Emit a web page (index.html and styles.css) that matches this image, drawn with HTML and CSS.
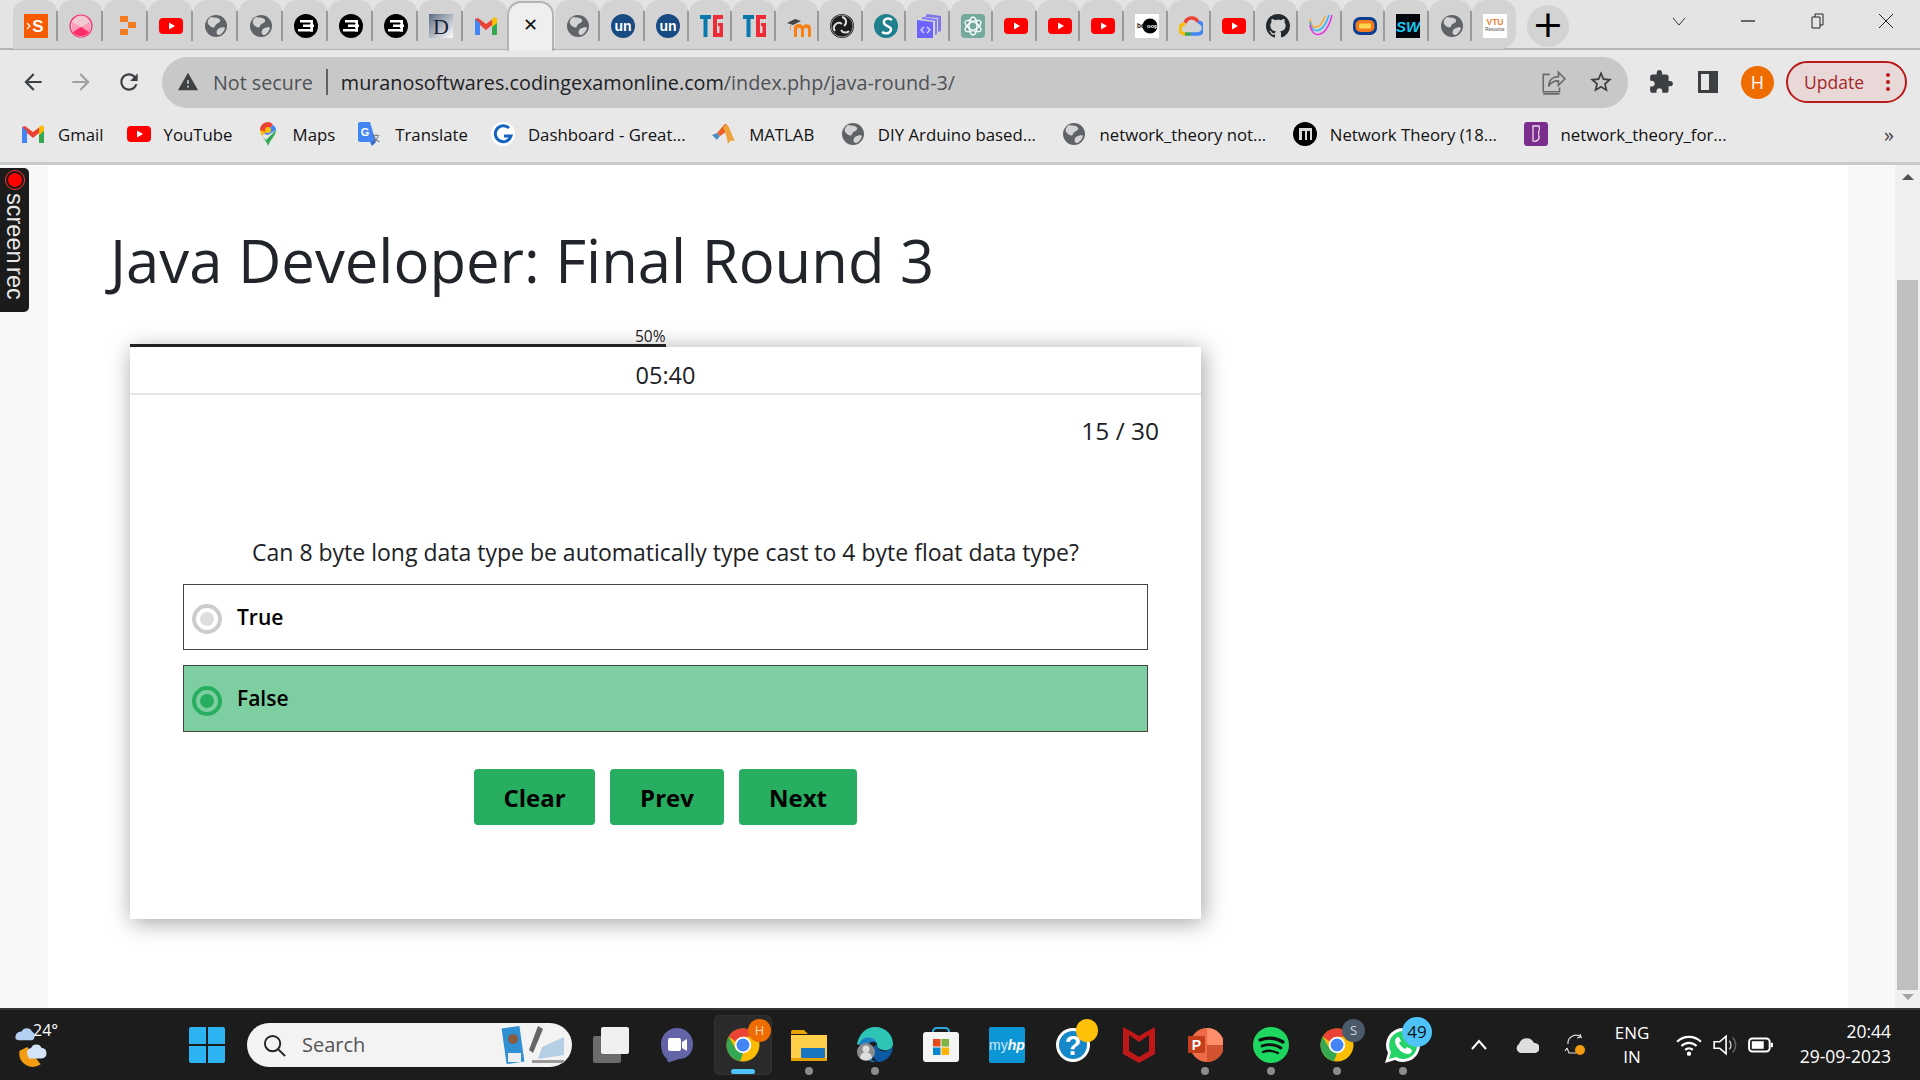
FILE: index.html
```html
<!DOCTYPE html>
<html lang="en">
<head>
  <meta charset="UTF-8">
  <title>Java Developer: Final Round 3</title>
  <link rel="stylesheet" href="styles.css">
</head>
<body>
  <!-- favicon set -->
  <svg class="defs" width="0" height="0">
    <symbol id="fav-pink" viewBox="0 0 24 24"><circle cx="12" cy="12" r="11" fill="#f2c9d5" stroke="#f4326c" stroke-width="1.2"/><path d="M3 8l9 5 9-5v9a10 10 0 0 1-18 0z" fill="#ff9db8"/><path d="M4 18l8-5 8 5a10 10 0 0 1-16 0z" fill="#fb2c68"/></symbol>
    <symbol id="fav-orange" viewBox="0 0 24 24"><path d="M6 2h8v6H6zM14 8h8v6h-8zM6 15h8v6H6z" fill="#f47b20"/></symbol>
    <symbol id="fav-yt" viewBox="0 0 24 24"><rect y="4" width="24" height="16" rx="4" fill="#f00"/><path d="M10 8.500l6 3.500-6 3.500z" fill="#fff"/></symbol>
    <symbol id="fav-globe" viewBox="0 0 24 24"><circle cx="12" cy="12" r="11" fill="#5f6368"/><path d="M7 3c3 1 8 0 9 3s-4 3-5 6-4 1-6-1-2-5 2-8zM14 15c3-2 7-2 7-1s-3 7-6 7-3-4-1-6z" fill="#d3d3d3"/></symbol>
    <symbol id="fav-three" viewBox="0 0 24 24"><circle cx="12" cy="12" r="12" fill="#000"/><path d="M6 6h13v2.500H6zM9 10.500h11v2.500H9zM4 15h15v2.500H4z" fill="#fff"/><path d="M16 6h3v11.500h-3z" fill="#fff"/><path d="M11 9.400h6v.6h-6zM9 14h8v.4H9z" fill="#000"/></symbol>
    <symbol id="fav-gmail" viewBox="0 0 24 24"><path d="M1 5l3-1 8 6 8-6 3 1v16h-5V11l-6 5-6-5v10H1z" fill="#ea4335"/><path d="M1 5v16h5V9z" fill="#4285f4"/><path d="M23 5v16h-5V9z" fill="#34a853"/><path d="M18 5l3-2 2 2v4l-5 4z" fill="#fbbc04"/></symbol>
    <symbol id="fav-tg" viewBox="0 0 24 24"><path d="M0 1h11v4H7.500v18h-4V5H0z" fill="#0a78ad"/><path d="M13 1h10v4h-6v14h2.500v-7H18V9h5v14H13z" fill="#ee2b37"/></symbol>
    <symbol id="fav-moodle" viewBox="0 0 24 24"><path d="M7 14v9h3v-7c0-3 4-3 4 0v7h3v-7c0-3 4-3 4 0v7h3v-9c0-4-6-5-8-2-2-3-9-3-9 2z" fill="#f98012"/><path d="M0 9l8-4 6 2-8 4z" fill="#444"/><path d="M3 11v5h1v-5z" fill="#f98012" opacity=".6"/></symbol>
    <symbol id="fav-obs" viewBox="0 0 24 24"><circle cx="12" cy="12" r="12" fill="#1c1c1c"/><circle cx="12" cy="12" r="11" fill="none" stroke="#e8e8e8" stroke-width=".6"/><path d="M12 3a5 5 0 0 1 2 9M5 17a5 5 0 0 1 7-7M19 17a5 5 0 0 1-8-1" fill="none" stroke="#dcdcdc" stroke-width="2"/></symbol>
    <symbol id="fav-teal" viewBox="0 0 24 24"><circle cx="12" cy="12" r="12" fill="#1f7f8c"/><path d="M18 6c-4-3-9-1-8 3s8 3 7 7-6 4-9 2" fill="none" stroke="#fff" stroke-width="2.400"/></symbol>
    <symbol id="fav-stack" viewBox="0 0 24 24"><path d="M10 0l14 2v15l-3 1V4L8 3z" fill="#6a63ee" opacity=".8"/><path d="M5 3l15 2v15l-2 1V7L5 5z" fill="#7a73ff" opacity=".9"/><path d="M0 6l16 2v16H0z" fill="#6c63ff"/><path d="M7 13l-3 3 3 3M10 13l3 3-3 3" fill="none" stroke="#dcd9ff" stroke-width="1.300"/></symbol>
    <symbol id="fav-gpt" viewBox="0 0 24 24"><rect width="24" height="24" rx="4" fill="#74aa9c"/><g fill="none" stroke="#fff" stroke-width="1.300"><ellipse cx="12" cy="12" rx="4" ry="9"/><ellipse cx="12" cy="12" rx="4" ry="9" transform="rotate(60 12 12)"/><ellipse cx="12" cy="12" rx="4" ry="9" transform="rotate(120 12 12)"/></g></symbol>
    <symbol id="fav-gcloud" viewBox="0 0 24 24"><path d="M6 9a7 7 0 0 1 13-1" fill="none" stroke="#ea4335" stroke-width="3.500"/><path d="M19 8a6 6 0 0 1-1 12h-6" fill="none" stroke="#4285f4" stroke-width="3.500"/><path d="M12 20H6" fill="none" stroke="#34a853" stroke-width="3.500"/><path d="M6 20a5 5 0 0 1 0-10" fill="none" stroke="#fbbc04" stroke-width="3.500"/></symbol>
    <symbol id="fav-github" viewBox="0 0 16 16"><path fill="#24292e" d="M8 0C3.58 0 0 3.58 0 8c0 3.54 2.29 6.53 5.47 7.59.4.07.55-.17.55-.38 0-.19-.01-.82-.01-1.49-2.01.37-2.53-.49-2.69-.94-.09-.23-.48-.94-.82-1.13-.28-.15-.68-.52-.01-.53.63-.01 1.08.58 1.23.82.72 1.21 1.87.87 2.33.66.07-.52.28-.87.51-1.07-1.78-.2-3.64-.89-3.64-3.95 0-.87.31-1.59.82-2.15-.08-.2-.36-1.02.08-2.12 0 0 .67-.21 2.2.82.64-.18 1.32-.27 2-.27.68 0 1.36.09 2 .27 1.53-1.04 2.2-.82 2.2-.82.44 1.1.16 1.92.08 2.12.51.56.82 1.27.82 2.15 0 3.07-1.87 3.75-3.65 3.95.29.25.54.73.54 1.48 0 1.07-.01 1.93-.01 2.2 0 .21.15.46.55.38A8.013 8.013 0 0016 8c0-4.42-3.58-8-8-8z"/></symbol>
    <symbol id="fav-curve" viewBox="0 0 24 24"><g fill="none" stroke-width="1.500"><path d="M1 5c1 11 10 12 15-3" stroke="#f9a825"/><path d="M1 8c1 12 13 13 19-7" stroke="#29b6f6"/><path d="M1 11c2 14 16 14 22-10" stroke="#ec2fe3"/></g></symbol>
    <symbol id="fav-pill" viewBox="0 0 24 24"><rect y="3" width="24" height="18" rx="7" fill="#0c3d91"/><rect x="2.500" y="6" width="19" height="12" rx="5" fill="#f47b20"/><rect x="6" y="9.500" width="12" height="5" rx="1" fill="#ffd54f"/></symbol>

    <!-- toolbar + bookmarks -->
    <symbol id="ic-back" viewBox="0 0 24 24"><path d="M20 11H7.830l5.590-5.590L12 4l-8 8 8 8 1.410-1.410L7.830 13H20v-2z"/></symbol>
    <symbol id="ic-reload" viewBox="0 0 24 24"><path d="M17.650 6.350C16.200 4.900 14.210 4 12 4c-4.420 0-7.990 3.580-7.990 8s3.570 8 7.990 8c3.730 0 6.840-2.550 7.730-6h-2.080c-.82 2.330-3.040 4-5.650 4-3.310 0-6-2.690-6-6s2.690-6 6-6c1.660 0 3.140.69 4.220 1.780L13 11h7V4l-2.350 2.350z"/></symbol>
    <symbol id="ic-warn" viewBox="0 0 24 24"><path d="M1 21h22L12 2 1 21zm12-3h-2v-2h2v2zm0-4h-2v-4h2v4z"/></symbol>
    <symbol id="ic-star" viewBox="0 0 24 24"><path d="M22 9.240l-7.190-.62L12 2 9.190 8.630 2 9.240l5.460 4.730L5.820 21 12 17.270 18.180 21l-1.630-7.030L22 9.240zM12 15.400l-3.760 2.270 1-4.280-3.320-2.880 4.380-.38L12 6.100l1.710 4.040 4.380.38-3.320 2.880 1 4.280L12 15.400z"/></symbol>
    <symbol id="ic-ext" viewBox="0 0 24 24"><path d="M20.500 11H19V7c0-1.100-.9-2-2-2h-4V3.500C13 2.120 11.880 1 10.500 1S8 2.120 8 3.500V5H4c-1.100 0-1.990.9-1.990 2v3.800H3.500c1.490 0 2.700 1.210 2.700 2.700s-1.210 2.700-2.700 2.700H2V20c0 1.100.9 2 2 2h3.800v-1.500c0-1.490 1.210-2.700 2.700-2.700 1.490 0 2.700 1.210 2.700 2.700V22H17c1.100 0 2-.9 2-2v-4h1.500c1.380 0 2.500-1.120 2.500-2.500S21.880 11 20.500 11z"/></symbol>
    <symbol id="ic-share" viewBox="0 0 24 24"><path d="M9 5H3v16h15v-4M3 23h15M8 16c0-6 4-9 9-9V3l6 6-6 6v-4c-4 0-7 1-9 5z" fill="none" stroke="currentColor" stroke-width="1.500"/></symbol>
    <symbol id="bm-maps" viewBox="0 0 24 24"><path d="M12 0C7 0 4 4 4 8l4 4 9-9c-1-2-3-3-5-3z" fill="#ea4335"/><path d="M17 3L8 12l4 1 8-5c0-2-1-4-3-5z" fill="#4285f4"/><path d="M4 8c0 2 1 4 2 6l4-4z" fill="#fbbc04"/><path d="M6 14c2 3 5 6 6 10 1-4 4-7 6-10 1-2 2-4 2-6L10 18z" fill="#34a853"/><circle cx="12" cy="8" r="3" fill="#fbbc04"/></symbol>
    <symbol id="bm-g" viewBox="0 0 24 24"><circle cx="12" cy="12" r="12" fill="#fff"/><path d="M18 6a8 8 0 1 0 2 8h-7" fill="none" stroke="#1565c0" stroke-width="3"/></symbol>
    <symbol id="bm-matlab" viewBox="0 0 24 24"><path d="M0 13l5-2 3 3-3 4z" fill="#4a90c2"/><path d="M5 11l7-8c2-3 3 0 5 5l-9 6z" fill="#e8622a"/><path d="M14 2c3 0 5 10 9 17-3-1-5-1-7 3-1-6-3-14-5-16z" fill="#f0a33a"/></symbol>
    <symbol id="bm-book" viewBox="0 0 24 24"><rect width="24" height="24" rx="3" fill="#7b2d8b"/><path d="M9 4h6c2 5-2 5 0 10 1 4-3 6-6 5z" fill="none" stroke="#f0d8f0" stroke-width="1.300"/></symbol>
    <symbol id="fav-three-b" viewBox="0 0 24 24"><circle cx="12" cy="12" r="12" fill="#000"/><path d="M6 6v12h3V9h3v9h2V9h3v9h2V6z" fill="#fff" opacity=".85"/></symbol>

    <!-- taskbar -->
    <symbol id="tb-chrome" viewBox="0 0 24 24"><circle cx="12" cy="12" r="11" fill="#fbbc04"/><path d="M7 9.500L2.470 6.500A11 11 0 0 1 21.530 6.500H12z" fill="#ea4335"/><path d="M2.470 6.500L7.240 14.750 12 17.500 10 22.800A11 11 0 0 1 2.470 6.500z" fill="#34a853"/><circle cx="12" cy="12" r="5.500" fill="#fff"/><circle cx="12" cy="12" r="4.300" fill="#4285f4"/></symbol>
    <symbol id="tb-meet" viewBox="0 0 36 36"><path d="M18 1c9 0 16 7 16 16s-6 15-14 15l-9 3c-2 1-3-1-3-3C4 29 2 23 2 17 2 8 9 1 18 1z" fill="#6264a7"/><rect x="9" y="11" width="13" height="13" rx="2" fill="#fff"/><path d="M23 15l5-3v12l-5-3z" fill="#fff"/></symbol>
    <symbol id="tb-folder" viewBox="0 0 36 36"><path d="M0 5a2 2 0 0 1 2-2h11l4 4H0z" fill="#e8a200"/><path d="M0 8h36v26H0z" fill="#ffcf4a"/><rect x="10" y="21" width="24" height="10" rx="1" fill="#1976c2"/><rect y="31" width="36" height="3" fill="#e8a200"/></symbol>
    <symbol id="tb-edge" viewBox="0 0 36 36"><path d="M18 0c11 0 18 8 18 17 0 5-5 7-10 6s-6-3-6-6c-3-7-12-7-17 0-2 1-3 1-3 0C2 7 9 0 18 0z" fill="#2ec5b6"/><path d="M3 15c4-6 14-6 17 1-5-3-9 0-10 5-1 6 3 12 9 14C9 35 1 27 3 15z" fill="#1b7fc6"/><path d="M20 18c0 5 5 7 9 6s7-3 7-5c0 8-6 16-15 16-5-3-8-10-4-16z" fill="#0c59a4"/><circle cx="9" cy="25" r="9" fill="#8c8c8c"/><circle cx="9" cy="22" r="3.500" fill="#ddd"/><path d="M3 31a6 6 0 0 1 12 0 9 9 0 0 1-12 0z" fill="#ddd"/></symbol>
    <symbol id="tb-store" viewBox="0 0 36 36"><path d="M10 6V4a4 4 0 0 1 4-3h8a4 4 0 0 1 4 3v2" fill="none" stroke="#2aa8e0" stroke-width="2"/><rect y="5" width="36" height="30" rx="3" fill="#f4f4f4"/><rect x="10" y="12" width="7.500" height="7.500" fill="#e64a19"/><rect x="18.500" y="12" width="7.500" height="7.500" fill="#7cb342"/><rect x="10" y="20.500" width="7.500" height="7.500" fill="#0288d1"/><rect x="18.500" y="20.500" width="7.500" height="7.500" fill="#ffb300"/></symbol>
    <symbol id="tb-mcafee" viewBox="0 0 36 36"><path d="M2 0l16 9 16-9v27L18 36 2 27zm6 8v16l10 6 10-6V8l-10 7z" fill="#c01818" fill-rule="evenodd"/></symbol>
    <symbol id="tb-spotify" viewBox="0 0 36 36"><circle cx="18" cy="18" r="18" fill="#1ed760"/><g fill="none" stroke="#111" stroke-linecap="round"><path d="M7 13c8-3 16-2 23 2" stroke-width="3.200"/><path d="M9 19c6-2 13-2 19 2" stroke-width="2.800"/><path d="M10 25c5-2 11-1 15 1" stroke-width="2.300"/></g></symbol>
    <symbol id="tb-whatsapp" viewBox="0 0 36 36"><path d="M18 1a17 17 0 0 0-15 25L0 36l10-3A17 17 0 1 0 18 1z" fill="#fff"/><path d="M18 4a14 14 0 0 0-12 21l-2 7 7-2A14 14 0 1 0 18 4z" fill="#25d366"/><path d="M13 10c-1 0-3 2-3 4 0 6 7 13 13 13 2 0 4-2 4-3l-1-2-4-2-2 2c-2-1-5-4-6-6l2-2-2-4z" fill="#fff"/></symbol>
    <symbol id="tb-weather" viewBox="0 0 36 48"><path d="M4 30a14 14 0 0 0 22 14L12 26z" fill="#f39c12"/><path d="M0 18a6 6 0 0 1 6-8 6 6 0 0 1 11 0 5 5 0 0 1 0 9H3z" fill="#b3d0f2"/><path d="M12 34a5 5 0 0 1 4-7 6 6 0 0 1 11 0 5 5 0 0 1 5 5 5 5 0 0 1-5 6H14z" fill="#d3e4f8"/></symbol>
    <symbol id="tb-wifi" viewBox="0 0 24 24"><path d="M1 9c6-6 16-6 22 0M5 13c4-4 10-4 14 0M8.500 16.500c2-2 5-2 7 0" fill="none" stroke="#fff" stroke-width="2"/><circle cx="12" cy="20" r="2" fill="#fff"/></symbol>
    <symbol id="tb-vol" viewBox="0 0 24 24"><path d="M2 9h5l6-5v16l-6-5H2z" fill="none" stroke="#fff" stroke-width="1.500"/><path d="M16 8a6 6 0 0 1 0 8" fill="none" stroke="#ccc" stroke-width="1.300"/><path d="M19 5a10 10 0 0 1 0 14" fill="none" stroke="#666" stroke-width="1.300"/></symbol>
    <symbol id="tb-batt" viewBox="0 0 24 24"><rect x="1" y="6" width="19" height="12" rx="3" fill="none" stroke="#fff" stroke-width="1.800"/><rect x="3.500" y="8.500" width="11" height="7" fill="#fff"/><rect x="21" y="10" width="2" height="4" fill="#fff"/></symbol>
  </svg>

  <header class="tabstrip">
    <div class="tab"><svg class="fav" viewBox="0 0 24 24"><rect width="24" height="24" fill="#f85a00"/><path d="M3 9l3 3-3 3" fill="none" stroke="#fff" stroke-width="1.200"/><text x="14" y="18" text-anchor="middle" class="svg-bold" font-size="17" fill="#fff">S</text></svg></div>
    <div class="tab"><svg class="fav"><use href="#fav-pink"/></svg></div>
    <div class="tab"><svg class="fav"><use href="#fav-orange"/></svg></div>
    <div class="tab"><svg class="fav"><use href="#fav-yt"/></svg></div>
    <div class="tab"><svg class="fav"><use href="#fav-globe"/></svg></div>
    <div class="tab"><svg class="fav"><use href="#fav-globe"/></svg></div>
    <div class="tab"><svg class="fav"><use href="#fav-three"/></svg></div>
    <div class="tab"><svg class="fav"><use href="#fav-three"/></svg></div>
    <div class="tab"><svg class="fav"><use href="#fav-three"/></svg></div>
    <div class="tab"><svg class="fav" viewBox="0 0 24 24"><defs><linearGradient id="dg" x1="0" y1="0" x2="1" y2="1"><stop offset="0" stop-color="#5c6c84"/><stop offset="1" stop-color="#fff"/></linearGradient></defs><rect width="24" height="24" fill="url(#dg)"/><text x="12" y="20" text-anchor="middle" class="svg-serif" font-size="22" fill="#1b2233">D</text></svg></div>
    <div class="tab tab-before-active"><svg class="fav"><use href="#fav-gmail"/></svg></div>
    <div class="tab tab-active"><span class="tab-close">✕</span></div>
    <div class="tab"><svg class="fav"><use href="#fav-globe"/></svg></div>
    <div class="tab"><svg class="fav" viewBox="0 0 24 24"><circle cx="12" cy="12" r="12" fill="#1a4a82"/><text x="12" y="17" text-anchor="middle" class="svg-bold" font-size="14" fill="#fff">un</text></svg></div>
    <div class="tab tab-narrow"><svg class="fav" viewBox="0 0 24 24"><circle cx="12" cy="12" r="12" fill="#1a4a82"/><text x="12" y="17" text-anchor="middle" class="svg-bold" font-size="14" fill="#fff">un</text></svg></div>
    <div class="tab tab-narrow"><svg class="fav"><use href="#fav-tg"/></svg></div>
    <div class="tab tab-narrow"><svg class="fav"><use href="#fav-tg"/></svg></div>
    <div class="tab tab-narrow"><svg class="fav"><use href="#fav-moodle"/></svg></div>
    <div class="tab tab-narrow"><svg class="fav"><use href="#fav-obs"/></svg></div>
    <div class="tab tab-narrow"><svg class="fav"><use href="#fav-teal"/></svg></div>
    <div class="tab tab-narrow"><svg class="fav"><use href="#fav-stack"/></svg></div>
    <div class="tab tab-narrow"><svg class="fav"><use href="#fav-gpt"/></svg></div>
    <div class="tab tab-narrow"><svg class="fav"><use href="#fav-yt"/></svg></div>
    <div class="tab tab-narrow"><svg class="fav"><use href="#fav-yt"/></svg></div>
    <div class="tab tab-narrow"><svg class="fav"><use href="#fav-yt"/></svg></div>
    <div class="tab tab-narrow"><svg class="fav" viewBox="0 0 24 24"><rect width="24" height="24" fill="#fff"/><circle cx="15" cy="12" r="7.500" fill="#000"/><text x="2" y="14" class="svg-bold" font-size="6.500" fill="#111">bel</text><text x="12" y="14" class="svg-bold" font-size="6" fill="#fff">oop</text></svg></div>
    <div class="tab tab-narrow"><svg class="fav"><use href="#fav-gcloud"/></svg></div>
    <div class="tab tab-narrow"><svg class="fav"><use href="#fav-yt"/></svg></div>
    <div class="tab tab-narrow"><svg class="fav"><use href="#fav-github"/></svg></div>
    <div class="tab tab-narrow"><svg class="fav"><use href="#fav-curve"/></svg></div>
    <div class="tab tab-narrow"><svg class="fav"><use href="#fav-pill"/></svg></div>
    <div class="tab tab-narrow"><svg class="fav" viewBox="0 0 24 24"><rect width="24" height="24" fill="#04060d"/><text x="12" y="18" text-anchor="middle" class="svg-bold svg-italic" font-size="15" fill="#18c6ef">SW</text></svg></div>
    <div class="tab tab-narrow"><svg class="fav"><use href="#fav-globe"/></svg></div>
    <div class="tab tab-narrow tab-last"><svg class="fav" viewBox="0 0 24 24"><rect width="24" height="24" fill="#fff"/><text x="12" y="11" text-anchor="middle" class="svg-bold" font-size="8.500" fill="#e8843e">VTU</text><text x="12" y="17" text-anchor="middle" font-size="4.500" class="svg-sans" fill="#444">Resource</text></svg></div>
    <div class="new-tab">+</div>
    <div class="win-controls">
      <svg class="win-btn" viewBox="0 0 16 16"><path d="M2 5l6 7 6-7" fill="none" stroke="#333"/></svg>
      <svg class="win-btn" viewBox="0 0 16 16"><path d="M1 8h14" stroke="#222" stroke-width="1.300"/></svg>
      <svg class="win-btn" viewBox="0 0 16 16"><path d="M3 4h8v11H3zM6 4V1h8v11h-3" fill="none" stroke="#222"/></svg>
      <svg class="win-btn" viewBox="0 0 16 16"><path d="M1 1l14 14M15 1L1 15" stroke="#222"/></svg>
    </div>
  </header>

  <div class="toolbar">
    <svg class="nav-icon"><use href="#ic-back"/></svg>
    <svg class="nav-icon nav-off nav-flip"><use href="#ic-back"/></svg>
    <svg class="nav-icon"><use href="#ic-reload"/></svg>
    <div class="omnibox">
      <svg class="warn-icon"><use href="#ic-warn"/></svg>
      <span class="not-secure">Not secure</span>
      <span class="omni-sep"></span>
      <span class="url">muranosoftwares.codingexamonline.com<span class="url-path">/index.php/java-round-3/</span></span>
      <svg class="omni-icon omni-share"><use href="#ic-share"/></svg>
      <svg class="omni-icon omni-star"><use href="#ic-star"/></svg>
    </div>
    <svg class="tool-icon tool-ext"><use href="#ic-ext"/></svg>
    <div class="side-panel"></div>
    <div class="avatar">H</div>
    <div class="update">Update<span class="update-dots"><i></i><i></i><i></i></span></div>
  </div>

  <nav class="bookmarks">
    <a class="bm"><svg class="bm-icon"><use href="#fav-gmail"/></svg>Gmail</a>
    <a class="bm"><svg class="bm-icon"><use href="#fav-yt"/></svg>YouTube</a>
    <a class="bm"><svg class="bm-icon"><use href="#bm-maps"/></svg>Maps</a>
    <a class="bm"><svg class="bm-icon" viewBox="0 0 24 24"><path d="M8 6h14a2 2 0 0 1 2 2v14H12z" fill="#e8e8e8"/><path d="M0 2a2 2 0 0 1 2-2h10l6 20H2a2 2 0 0 1-2-2z" fill="#4285f4"/><path d="M12 20l2 4 4-4z" fill="#3367d6"/><text x="7" y="14" text-anchor="middle" class="svg-bold" font-size="11" fill="#fff">G</text><text x="18" y="19" text-anchor="middle" class="svg-sans" font-size="8" fill="#555">文</text></svg>Translate</a>
    <a class="bm"><svg class="bm-icon"><use href="#bm-g"/></svg>Dashboard - Great...</a>
    <a class="bm"><svg class="bm-icon"><use href="#bm-matlab"/></svg>MATLAB</a>
    <a class="bm"><svg class="bm-icon"><use href="#fav-globe"/></svg>DIY Arduino based...</a>
    <a class="bm"><svg class="bm-icon"><use href="#fav-globe"/></svg>network_theory not...</a>
    <a class="bm"><svg class="bm-icon"><use href="#fav-three-b"/></svg>Network Theory (18...</a>
    <a class="bm"><svg class="bm-icon"><use href="#bm-book"/></svg>network_theory_for...</a>
    <span class="bm-more">»</span>
  </nav>

  <div class="viewport">
    <div class="gutter"></div>
    <main class="page">
      <h1 class="page-title">Java Developer: Final Round 3</h1>
      <section class="quiz">
        <div class="progress"><span class="progress-label">50%</span></div>
        <div class="card">
          <div class="timer">05:40</div>
          <div class="count">15 / 30</div>
          <p class="question">Can 8 byte long data type be automatically type cast to 4 byte float data type?</p>
          <div class="option"><span class="radio"></span><span class="option-text">True</span></div>
          <div class="option option-picked"><span class="radio"></span><span class="option-text">False</span></div>
          <div class="actions">
            <button class="btn btn-clear">Clear</button>
            <button class="btn btn-prev">Prev</button>
            <button class="btn btn-next">Next</button>
          </div>
        </div>
      </section>
    </main>
    <div class="gutter gutter-right"></div>
    <div class="scrollbar">
      <span class="arrow arrow-up"></span>
      <span class="thumb"></span>
      <span class="arrow arrow-down"></span>
    </div>
  </div>

  <div class="screenrec"><span class="rec-dot"></span><span class="rec-text">screen rec</span></div>

  <footer class="taskbar">
    <div class="weather">
      <svg class="weather-icon"><use href="#tb-weather"/></svg>
      <span class="weather-temp">24°</span>
    </div>
    <div class="slot slot-start">
      <svg class="win-logo" viewBox="0 0 36 36"><path d="M0 2a2 2 0 0 1 2-2h15v17H0zM19 0h15a2 2 0 0 1 2 2v15H19zM0 19h17v17H2a2 2 0 0 1-2-2zM19 19h17v15a2 2 0 0 1-2 2H19z" fill="#2bb3f3"/></svg>
    </div>
    <div class="search">
      <svg class="search-icon" viewBox="0 0 24 24"><circle cx="10" cy="10" r="8" fill="none" stroke="#222" stroke-width="2"/><path d="M16 16l7 7" stroke="#222" stroke-width="2"/></svg>
      <span class="search-text">Search</span>
      <svg class="search-art" viewBox="0 0 64 44"><rect x="2" y="4" width="18" height="36" fill="#2f8fd0" transform="rotate(-8 11 22)"/><circle cx="11" cy="16" r="5" fill="#8a5a3c"/><rect x="6" y="30" width="13" height="9" fill="#eee"/><path d="M36 3l5 3-10 24-4-3z" fill="#666"/><path d="M40 24l22-10v18l-26 4z" fill="#b6cfe4"/><path d="M30 37h32v3H30z" fill="#999"/></svg>
    </div>
    <div class="slot"><svg class="task-view" viewBox="0 0 36 36"><rect x="0" y="9" width="28" height="27" rx="2" fill="#6b6b6b"/><rect x="8" y="0" width="28" height="27" rx="2" fill="#f0f0f0"/></svg></div>
    <div class="slot"><svg class="app"><use href="#tb-meet"/></svg></div>
    <div class="slot slot-active"><svg class="app"><use href="#tb-chrome"/></svg><span class="badge badge-h">H</span><span class="indicator indicator-on"></span></div>
    <div class="slot"><svg class="app"><use href="#tb-folder"/></svg><span class="indicator"></span></div>
    <div class="slot"><svg class="app"><use href="#tb-edge"/></svg><span class="indicator"></span></div>
    <div class="slot"><svg class="app"><use href="#tb-store"/></svg></div>
    <div class="slot"><span class="myhp">my<b>hp</b></span></div>
    <div class="slot"><svg class="app" viewBox="0 0 36 36"><circle cx="18" cy="18" r="17" fill="#fff"/><circle cx="18" cy="18" r="14" fill="#1688c9"/><text x="18" y="28" text-anchor="middle" class="svg-bold" font-size="27" fill="#fff">?</text></svg><span class="badge badge-dot"></span></div>
    <div class="slot"><svg class="app"><use href="#tb-mcafee"/></svg></div>
    <div class="slot"><svg class="app" viewBox="0 0 36 36"><circle cx="20" cy="18" r="17" fill="#ed6c47"/><path d="M20 1a17 17 0 0 1 17 17H20z" fill="#ff8f6b"/><path d="M20 18h17a17 17 0 0 1-17 17z" fill="#d35230"/><rect x="1" y="9" width="17" height="17" rx="1" fill="#c43e1c"/><text x="9.500" y="23" text-anchor="middle" class="svg-bold" font-size="14" fill="#fff">P</text></svg><span class="indicator"></span></div>
    <div class="slot"><svg class="app"><use href="#tb-spotify"/></svg><span class="indicator"></span></div>
    <div class="slot"><svg class="app"><use href="#tb-chrome"/></svg><span class="badge badge-s">S</span><span class="indicator"></span></div>
    <div class="slot"><svg class="app"><use href="#tb-whatsapp"/></svg><span class="badge badge-count">49</span><span class="indicator"></span></div>

    <div class="tray">
      <div class="tray-slot"><svg class="tray-icon" viewBox="0 0 24 24"><path d="M5 16l7-8 7 8" fill="none" stroke="#fff" stroke-width="2"/></svg></div>
      <div class="tray-slot"><svg class="tray-icon" viewBox="0 0 24 24"><path d="M5 20a5 5 0 0 1-1-9 8 8 0 0 1 15-1 5 5 0 0 1 1 10z" fill="#ddd"/></svg></div>
      <div class="tray-slot tray-sync"><svg class="tray-icon" viewBox="0 0 24 24"><path d="M5 11a8 8 0 0 1 13-7l-1-3M18 4l-4 1M4 15l2 5h7M4 15l-2 3" fill="none" stroke="#ddd" stroke-width="1.200"/><circle cx="17" cy="17" r="5" fill="#f39c12"/></svg></div>
      <div class="lang">ENG<br>IN</div>
      <svg class="tray-sys"><use href="#tb-wifi"/></svg>
      <svg class="tray-sys"><use href="#tb-vol"/></svg>
      <svg class="tray-sys"><use href="#tb-batt"/></svg>
      <div class="clock">20:44<br>29-09-2023</div>
    </div>
  </footer>
</body>
</html>
```

FILE: styles.css
```css
* {
  box-sizing: border-box;
}

body {
  margin: 0;
  width: 1920px;
  height: 1080px;
  display: flex;
  flex-direction: column;
  overflow: hidden;
  position: relative;
  background: #fff;
  color: #202124;
  font-family: "Open Sans", "Noto Sans", sans-serif;
}

.defs {
  position: absolute;
}

.svg-bold {
  font-family: "Liberation Sans", sans-serif;
  font-weight: 700;
}

.svg-sans {
  font-family: "Liberation Sans", "Noto Sans CJK SC", sans-serif;
}

.svg-serif {
  font-family: "Liberation Serif", serif;
}

.svg-italic {
  font-style: italic;
}

/* tab strip */
.tabstrip {
  height: 50px;
  flex: none;
  display: flex;
  padding-left: 13px;
  background: #e4e4e4;
  border-bottom: 2px solid #b4b4b4;
}

.tab {
  position: relative;
  width: 45px;
  height: 49px;
  padding: 14px 0 0 11px;
  background: #d3d3d3;
  border-radius: 14px 14px 0 0;
}

.tab::after {
  content: "";
  position: absolute;
  right: 0;
  top: 11px;
  height: 30px;
  width: 2px;
  background: #9a9a9a;
}

.tab-narrow {
  width: 43.55px;
}

.tab-last {
  border-top-right-radius: 14px;
  border-bottom-right-radius: 16px;
}

.tab-last::after,
.tab-before-active::after {
  display: none;
}

.tab-active {
  width: 47px;
  height: 50px;
  margin-top: 1px;
  background: #efefef;
  border: 2px solid #b4b4b4;
  border-bottom: 0;
  z-index: 1;
  margin-bottom: -2px;
  display: flex;
  align-items: center;
  justify-content: center;
  padding: 0 0 6px;
  margin-left: -1px;
  margin-right: 1px;
}

.tab-active::after {
  display: none;
}

.tab-close {
  font: 700 18px "DejaVu Sans", sans-serif;
  color: #111;
}

.fav {
  width: 24px;
  height: 24px;
  display: block;
}

.new-tab {
  width: 42px;
  height: 42px;
  margin: 5px 0 0 11px;
  border-radius: 50%;
  background: #d3d3d3;
  text-align: center;
  font: 400 38px/39px "DejaVu Sans", sans-serif;
  color: #000;
}

.win-controls {
  display: flex;
  margin-left: auto;
  padding: 13px 26px 0 0;
  gap: 53px;
}

.win-btn {
  width: 16px;
  height: 16px;
}

/* address bar */
.toolbar {
  height: 64px;
  flex: none;
  display: flex;
  align-items: center;
  padding-left: 20px;
  background: #e8e8e8;
}

.nav-icon {
  width: 26px;
  height: 26px;
  margin-right: 22px;
  fill: #3c4043;
}

.nav-off {
  fill: #a0a0a0;
}

.nav-flip {
  transform: scaleX(-1);
}

.omnibox {
  width: 1466px;
  height: 51px;
  margin-left: -2px;
  margin-right: 20px;
  display: flex;
  align-items: center;
  padding: 0 0 0 15px;
  border-radius: 26px;
  background: #c8c8c8;
}

.warn-icon {
  width: 22px;
  height: 22px;
  fill: #3c4043;
}

.not-secure {
  margin-left: 14px;
  font-size: 19.7px;
  color: #4d5156;
}

.omni-sep {
  width: 2px;
  height: 26px;
  margin: 0 13px;
  background: #5f6368;
}

.url {
  font-size: 19.8px;
  color: #202124;
}

.url-path {
  color: #4d5156;
}

.omni-icon {
  width: 26px;
  height: 26px;
  margin: 0 14px 0 22px;
  fill: #3c4043;
  color: #6a6a6a;
}

.omni-share {
  margin-left: auto;
}

.omni-star {
  margin-left: 8px;
}

.tool-ext {
  width: 26px;
  height: 26px;
  fill: #3c4043;
}

.side-panel {
  width: 20px;
  height: 22px;
  margin-left: 24px;
  border: 3px solid #3c4043;
  border-right-width: 9px;
}

.avatar {
  width: 33px;
  height: 33px;
  margin-left: 23px;
  border-radius: 50%;
  background: #ef6c00;
  color: #fff;
  text-align: center;
  font-size: 18px;
  line-height: 33px;
}

.update {
  width: 121px;
  height: 42px;
  margin-left: 12px;
  display: flex;
  align-items: center;
  padding-left: 16px;
  border: 2px solid #b71c1c;
  border-radius: 21px;
  background: #e8d8d8;
  color: #a52727;
  font-size: 17.5px;
}

.update-dots {
  display: flex;
  flex-direction: column;
  gap: 3px;
  margin-left: 22px;
}

.update-dots i {
  width: 4px;
  height: 4px;
  border-radius: 50%;
  background: #b71c1c;
}

/* bookmarks */
.bookmarks {
  height: 51px;
  flex: none;
  display: flex;
  align-items: center;
  padding: 0 0 8px 21px;
  gap: 23px;
  background: #e8e8e8;
  border-bottom: 3px solid #c9c9c9;
  font-size: 16.8px;
  color: #111;
}

.bm {
  display: flex;
  align-items: center;
  gap: 13px;
}

.bm:nth-child(n+6) {
  margin-left: 3.5px;
}

.bm-icon {
  width: 24px;
  height: 24px;
}

.bm-more {
  margin-left: auto;
  margin-right: 26px;
  font-size: 20px;
  color: #444;
}

/* page */
.viewport {
  flex: 1;
  min-height: 0;
  display: flex;
}

.gutter {
  width: 48px;
  background: #f7f8fa;
}

.gutter-right {
  width: 47px;
}

.page {
  flex: 1;
  padding-top: 53px;
}

.page-title {
  margin: 0 0 0 62px;
  font-size: 59.8px;
  line-height: 84px;
  font-weight: 400;
  color: #212529;
}

.quiz {
  position: relative;
  width: 1071px;
  margin: 42px 0 0 82px;
}

.progress {
  position: relative;
  width: 50%;
  height: 3px;
  background: #222;
}

.progress-label {
  position: absolute;
  right: 0;
  bottom: 2px;
  font-size: 15.5px;
  line-height: 17px;
}

.card {
  height: 572px;
  background: #fff;
  box-shadow: 2px 3px 22px rgba(0, 0, 0, .38);
}

.timer {
  height: 48px;
  padding-top: 5px;
  border-bottom: 2px solid #e4e4e4;
  text-align: center;
  font-size: 23.5px;
  line-height: 46px;
}

.count {
  margin-top: 19px;
  padding-right: 42px;
  text-align: right;
  font-size: 24.5px;
  line-height: 34px;
}

.question {
  margin: 87px 0 15px;
  text-align: center;
  font-size: 23px;
  line-height: 34px;
}

.option {
  width: 965px;
  height: 66px;
  margin: 0 0 15px 53px;
  display: flex;
  align-items: center;
  padding-left: 8px;
  border: 1px solid #444;
  background: #fff;
}

.option-picked {
  height: 67px;
  background: #7dcea0;
}

.radio {
  position: relative;
  width: 30px;
  height: 30px;
  margin-top: 4px;
  flex: none;
  border: 4px solid #ccc;
  border-radius: 50%;
  background: #fff;
}

.radio::after {
  content: "";
  position: absolute;
  inset: 4px;
  border-radius: 50%;
  background: #ddd;
}

.option-picked .radio {
  border-color: #27ae60;
  background: #7dcea0;
}

.option-picked .radio::after {
  background: #27ae60;
}

.option-text {
  margin: -1px 0 0 15px;
  font-size: 21px;
  font-weight: 600;
  color: #000;
}

.actions {
  display: flex;
  justify-content: center;
  gap: 15px;
  margin-top: 37px;
}

.btn {
  height: 56px;
  border: 0;
  border-radius: 4px;
  background: #27ae60;
  color: #000;
  font-family: inherit;
  font-size: 24px;
  font-weight: 700;
}

.btn-clear {
  width: 121px;
}

.btn-prev {
  width: 114px;
}

.btn-next {
  width: 118px;
}

.scrollbar {
  width: 25px;
  display: flex;
  flex-direction: column;
  align-items: center;
  padding-top: 9px;
  background: #f0f0f0;
}

.arrow {
  width: 0;
  height: 0;
  border-left: 6px solid transparent;
  border-right: 6px solid transparent;
}

.arrow-up {
  border-bottom: 6px solid #505050;
}

.arrow-down {
  border-top: 6px solid #a3a3a3;
}

.thumb {
  width: 21px;
  height: 710px;
  margin: 100px 0 4px;
  background: #bfbfbf;
}

.screenrec {
  position: absolute;
  left: 0;
  top: 168px;
  width: 29px;
  height: 144px;
  display: flex;
  flex-direction: column;
  align-items: center;
  padding-top: 5px;
  background: #1b1b1b;
  border-radius: 0 5px 5px 0;
}

.rec-dot {
  width: 14px;
  height: 14px;
  flex: none;
  border-radius: 50%;
  background: #f00;
  outline: 1px solid #f33;
  outline-offset: 2px;
}

.rec-text {
  margin-top: 6px;
  writing-mode: vertical-rl;
  color: #e8e8e8;
  font: 23.5px/22px "Liberation Sans", sans-serif;
  word-spacing: -3px;
  white-space: nowrap;
}

/* taskbar */
.taskbar {
  height: 72px;
  flex: none;
  display: flex;
  align-items: center;
  background: #1c1c1c;
  border-top: 2px solid #353535;
  color: #fff;
}

.weather {
  position: relative;
  width: 174px;
  height: 100%;
}

.weather-icon {
  position: absolute;
  left: 14px;
  top: 12px;
  width: 38px;
  height: 46px;
}

.weather-temp {
  position: absolute;
  left: 33px;
  top: 9px;
  font-size: 16px;
}

.slot {
  position: relative;
  width: 66px;
  height: 60px;
  flex: none;
  display: flex;
  align-items: center;
  justify-content: center;
}

.slot-start {
  margin-right: 7px;
}

.slot-active {
  width: 58px;
  margin: 0 4px;
  background: #2a2a2a;
  border-radius: 6px;
  box-shadow: inset 0 0 0 1px #333;
}

.win-logo {
  width: 36px;
  height: 36px;
}

.app,
.task-view {
  width: 36px;
  height: 36px;
}

.search {
  width: 325px;
  height: 44px;
  margin-right: 6px;
  display: flex;
  align-items: center;
  padding: 0 5px 0 16px;
  border-radius: 22px;
  background: #f3f3f3;
}

.search-icon {
  width: 23px;
  height: 23px;
}

.search-text {
  margin: -2px 0 0 16px;
  color: #555;
  font-size: 20px;
}

.search-art {
  width: 66px;
  height: 44px;
  margin-left: auto;
}

.badge {
  position: absolute;
  border-radius: 50%;
  text-align: center;
}

.badge-h {
  right: 1px;
  top: 4px;
  width: 23px;
  height: 23px;
  background: #ef6c00;
  font-size: 13px;
  line-height: 23px;
  color: #ffd9b8;
}

.badge-s {
  right: 5px;
  top: 4px;
  width: 23px;
  height: 23px;
  background: #4a5a68;
  font-size: 13px;
  line-height: 23px;
  color: #cfd8dc;
}

.badge-dot {
  right: 8px;
  top: 4px;
  width: 22px;
  height: 23px;
  background: #ffc107;
}

.badge-count {
  right: 4px;
  top: 2px;
  width: 30px;
  height: 30px;
  background: #4fc3f7;
  font-size: 17px;
  line-height: 29px;
  color: #111;
}

.indicator {
  position: absolute;
  left: 50%;
  bottom: 0;
  width: 8px;
  height: 8px;
  margin-left: -4px;
  border-radius: 50%;
  background: #8c8c8c;
}

.indicator-on {
  width: 24px;
  height: 5px;
  margin-left: -12px;
  bottom: 1px;
  border-radius: 3px;
  background: #4fc3f7;
}

.myhp {
  width: 36px;
  height: 36px;
  border-radius: 2px;
  background: #0d96d6;
  font: 14px/36px "Liberation Sans", sans-serif;
  text-align: center;
  color: #cfeaf7;
}

.myhp b {
  font-style: italic;
  color: #fff;
}

.tray {
  flex: 1;
  display: flex;
  align-items: center;
  margin-left: 19px;
  padding-right: 29px;
}

.tray-slot {
  width: 48px;
  display: flex;
  justify-content: center;
}

.tray-icon {
  width: 24px;
  height: 24px;
}

.lang {
  width: 66px;
  text-align: center;
  font-size: 17px;
  line-height: 24px;
}

.tray-sys {
  width: 26px;
  height: 26px;
  margin-left: 10px;
}

.lang + .tray-sys {
  margin-left: 11px;
}

.clock {
  margin: -3px 0 0 auto;
  text-align: right;
  font-size: 17.5px;
  line-height: 25px;
}
```
